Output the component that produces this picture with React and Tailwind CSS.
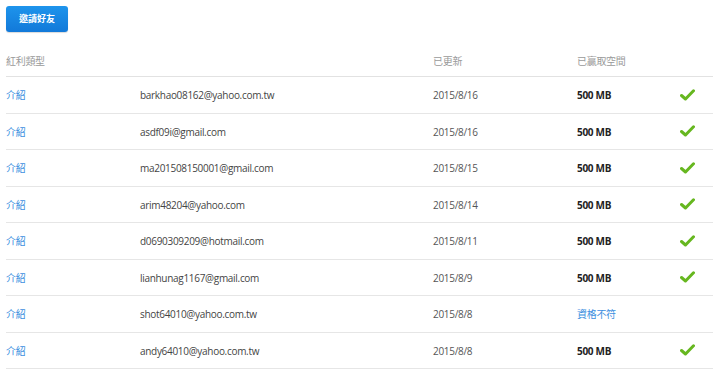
import React from "react";

const rows = [
  ["barkhao08162@yahoo.com.tw", "2015/8/16", true],
  ["asdf09i@gmail.com", "2015/8/16", true],
  ["ma201508150001@gmail.com", "2015/8/15", true],
  ["arim48204@yahoo.com", "2015/8/14", true],
  ["d0690309209@hotmail.com", "2015/8/11", true],
  ["lianhunag1167@gmail.com", "2015/8/9", true],
  ["shot64010@yahoo.com.tw", "2015/8/8", false],
  ["andy64010@yahoo.com.tw", "2015/8/8", true],
];

function Check() {
  return (
    <svg width="15" height="12" viewBox="0 0 15 12">
      <path d="M1.5 6.5 L5.5 10 L13.5 1.8" fill="none" stroke="#66b71f" strokeWidth="3" strokeLinecap="round" strokeLinejoin="round" />
    </svg>
  );
}

export default function App() {
  return (
    <div
      className="w-[720px] h-[374px] bg-white overflow-hidden pl-[6px] pt-[6px]"
      style={{ fontFamily: '"Open Sans", "Noto Sans CJK TC", sans-serif' }}
    >
      <button className="h-[26px] w-[62px] rounded-[3px] bg-gradient-to-b from-[#1e94ec] to-[#1279d9] text-white text-[9px] font-bold flex items-center justify-center shadow-[0_1px_1px_rgba(0,0,0,0.15)]">
        邀請好友
      </button>
      <div className="w-[707px] mt-[8px] text-[10px] tracking-[-0.3px]">
        <div className="h-[37px] pt-[6px] flex items-center text-[#9a9a9a] border-b border-[#e2e2e2]">
          <div className="w-[134px]">紅利類型</div>
          <div className="w-[293px]"></div>
          <div className="w-[144px]">已更新</div>
          <div className="flex-1">已贏取空間</div>
        </div>
        {rows.map(([email, date, ok], i) => (
          <div key={i} className="h-[36.5px] pt-[2px] flex items-center border-b-[1.5px] border-[#e6e6e6]">
            <div className="w-[134px] text-[#3d8fe0]">介紹</div>
            <div className="w-[293px] text-[#444]">{email}</div>
            <div className="w-[144px] text-[#555]">{date}</div>
            <div className="w-[103px]">
              {ok ? (
                <span className="font-bold text-[#222]">500 MB</span>
              ) : (
                <span className="text-[#3d8fe0]">資格不符</span>
              )}
            </div>
            <div className="flex-1 flex items-center pb-[2px]">{ok && <Check />}</div>
          </div>
        ))}
      </div>
    </div>
  );
}
